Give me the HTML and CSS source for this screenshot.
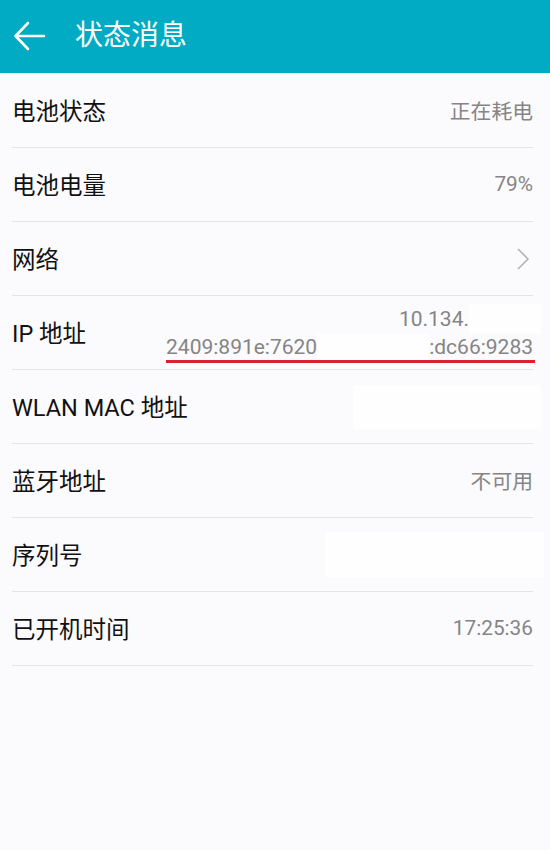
FILE: index.html
```html
<!DOCTYPE html>
<html lang="zh-CN">
<head>
<meta charset="utf-8">
<title>状态消息</title>
<link rel="stylesheet" href="styles.css">
</head>
<body>
<header class="appbar">
  <svg class="back" width="34" height="34" viewBox="0 0 34 34">
    <path d="M31 17H3M15 4L2.5 17L15 30" fill="none" stroke="#fff" stroke-width="2.6" stroke-linecap="round" stroke-linejoin="round"/>
  </svg>
  <h1 class="title">状态消息</h1>
</header>
<main class="list">
  <div class="row"><span class="label">电池状态</span><span class="value">正在耗电</span></div>
  <div class="row"><span class="label">电池电量</span><span class="value">79%</span></div>
  <div class="row"><span class="label">网络</span>
    <svg class="chev" width="14" height="24" viewBox="0 0 14 24"><path d="M2 2L12 12L2 22" fill="none" stroke="#b3b3b6" stroke-width="1.6"/></svg>
  </div>
  <div class="row"><span class="label">IP 地址</span>
    <div class="ip">
      <div class="ipline"><span>10.134.</span><span class="mask mask1"></span></div>
      <div class="ipline ipline2"><span>2409:891e:7620</span><span class="mask mask2"></span><span>:dc66:9283</span></div>
    </div>
  </div>
  <div class="row"><span class="label">WLAN MAC 地址</span><span class="mask mask3"></span></div>
  <div class="row"><span class="label">蓝牙地址</span><span class="value">不可用</span></div>
  <div class="row"><span class="label">序列号</span><span class="mask mask4"></span></div>
  <div class="row"><span class="label">已开机时间</span><span class="value">17:25:36</span></div>
</main>
</body>
</html>
```
FILE: styles.css
```css
html, body {
  margin: 0;
  padding: 0;
  background: #fbfafd;
  font-family: Roboto, "Noto Sans CJK SC", sans-serif;
}
.appbar {
  height: 73px;
  background: #00abc3;
  display: flex;
  align-items: center;
  padding-left: 13px;
  box-sizing: border-box;
}
.back {
  display: block;
  margin-top: -2px;
}
.title {
  margin: 0 0 0 28px;
  color: #fff;
  font-size: 28px;
  font-weight: 400;
  line-height: 1;
  margin-top: -2px;
}
.list {
  margin: 0 17px 0 12px;
  padding-top: 1px;
}
.row {
  height: 74px;
  box-sizing: border-box;
  border-bottom: 1px solid #e4e3e7;
  display: flex;
  align-items: center;
  justify-content: space-between;
}
.label {
  font-size: 23.5px;
  color: #111;
  margin-left: 0;
  padding-bottom: 2px;
}
.value {
  font-size: 20.8px;
  color: #858585;
  padding-bottom: 2px;
}
.chev {
  display: block;
  margin-right: 3px;
}
.ip {
  display: flex;
  flex-direction: column;
  align-items: flex-end;
  font-size: 21px;
  color: #858585;
  line-height: 25px;
  margin-top: 2px;
}
.ipline {
  display: flex;
  align-items: center;
}
.ipline2 {
  border-bottom: 3px solid #d9222c;
  padding-bottom: 0;
  margin-right: -2px;
  padding-right: 2px;
}
.mask {
  display: block;
  background: #fefefe;
}
.mask1 {
  width: 72px;
  height: 30px;
  margin-right: -8px;
}
.mask2 {
  width: 112px;
  height: 26px;
}
.mask3 {
  width: 188px;
  height: 44px;
  margin-right: -8px;
}
.mask4 {
  width: 219px;
  height: 45px;
  margin-right: -11px;
}
```
